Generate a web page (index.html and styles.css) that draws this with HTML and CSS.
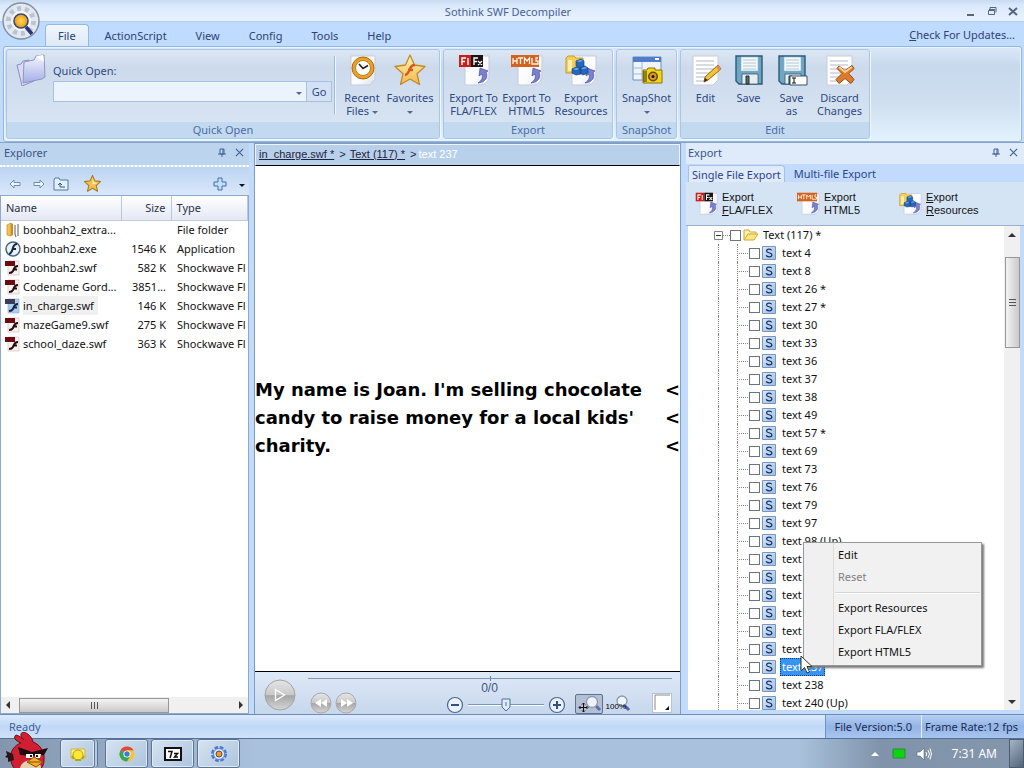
FILE: index.html
```html
<!DOCTYPE html>
<html lang="en">
<head>
<meta charset="utf-8">
<title>Sothink SWF Decompiler</title>
<link rel="stylesheet" href="styles.css">
</head>
<body>
<svg class="defs" aria-hidden="true">
  <defs>
    <linearGradient id="g-paper" x1="0" y1="0" x2="1" y2="1"><stop offset="0" stop-color="#fff"/><stop offset=".6" stop-color="#fbfbfe"/><stop offset="1" stop-color="#d9dff0"/></linearGradient>
    <linearGradient id="g-star" x1="0" y1="0" x2="0" y2="1"><stop offset="0" stop-color="#fff3b8"/><stop offset="1" stop-color="#f2b84a"/></linearGradient>
    <linearGradient id="g-folder" x1="0" y1="0" x2="0" y2="1"><stop offset="0" stop-color="#f7f6ff"/><stop offset="1" stop-color="#a3aee6"/></linearGradient>
    <radialGradient id="g-orb"><stop offset="0" stop-color="#ffd75a"/><stop offset="1" stop-color="#e89a10"/></radialGradient>
    <linearGradient id="g-ball" x1="0" y1="0" x2="0" y2="1"><stop offset="0" stop-color="#e6e6e6"/><stop offset=".5" stop-color="#c8c8c8"/><stop offset=".52" stop-color="#a6a6a6"/><stop offset="1" stop-color="#d6d6d6"/></linearGradient>
    <linearGradient id="g-s" x1="0" y1="0" x2="1" y2="1"><stop offset="0" stop-color="#dceafa"/><stop offset="1" stop-color="#9dbbe0"/></linearGradient>
  </defs>
  <symbol id="i-page" viewBox="0 0 32 32"><path d="M7 2h24v23l-6 6H7z" fill="url(#g-paper)" stroke="#c3cbdc"/><path d="M31 25h-6v6z" fill="#fff" stroke="#b9c2d4" stroke-width=".6"/></symbol>
  <symbol id="i-turn" viewBox="0 0 32 32"><path d="M20 29c8-1 10-6 8-11l2-1-8-3-1 8 3-2c1 4 0 6-4 9z" fill="#7a80cc" stroke="#4a4fa4" stroke-width=".7"/></symbol>
  <symbol id="i-flafx" viewBox="0 0 32 32"><use href="#i-page"/><use href="#i-turn"/><path d="M1 1h12v12H1z" fill="#c8201c"/><path d="M13 1h12v12H13z" fill="#1d1114"/><path d="M4 11V4h4M4 7.500h3M10 4v7M16 11V4h4M16 7.500h3M20 7l4 4M24 7l-4 4" fill="none" stroke="#fff" stroke-width="1.400"/></symbol>
  <symbol id="i-html5" viewBox="0 0 32 32"><use href="#i-page"/><use href="#i-turn"/><path d="M0 1h28v12H0z" fill="#d3611f"/><path d="M2 4v6M6 4v6M2 7h4M7 4h5M9.500 4v6M13.500 10V4l2.500 3 2.500-3v6M21 4v6h3M27 4h-2v3h2v3h-3" fill="none" stroke="#fff3df" stroke-width="1.300"/></symbol>
  <symbol id="i-res" viewBox="0 0 32 32"><use href="#i-page"/><use href="#i-turn"/><path d="M1 4l2-2h6l2 2h7v15H1z" fill="#f3cf58" stroke="#c89b28"/><path d="M3 6h4v11H3z" fill="#fff0ad"/><path d="M11 7l5-2 3 2v6l-5 1-3-2zM7 15l4-2 5 2v5l-5 1-4-2zM15 14l5-2 3 2v5l-5 2-3-2z" fill="#2467bf" stroke="#124488" stroke-width=".7"/><path d="M12 7l4-1 2 1-4 1zM8 15l4-1 2 1-3 1zM16 14l4-1 2 1-4 1z" fill="#7db3f0"/></symbol>
  <symbol id="i-clock" viewBox="0 0 32 32"><path d="M5 2h24v23l-5 6H5z" fill="url(#g-paper)" stroke="#c3cbdc"/><circle cx="17" cy="14" r="11" fill="#e9a227" stroke="#a86c12"/><circle cx="17" cy="14" r="7.500" fill="#fff" stroke="#b9801c"/><path d="M13 10l4 4.500 5-3" fill="none" stroke="#222" stroke-width="1.600"/></symbol>
  <symbol id="i-star" viewBox="0 0 32 32"><path d="M16 1l4.500 10L31 12.500l-8 7.300 2.500 10.700L16 25l-9.500 5.500L9 19.800 1 12.500 11.500 11z" fill="url(#g-star)" stroke="#c48b25" stroke-width="1.300" stroke-linejoin="round"/><path d="M21 11c-4 0-5 3-6 6-1 2-2 4-4 4M14 16h5" fill="none" stroke="#dc571c" stroke-width="2.400"/></symbol>
  <symbol id="i-gold" viewBox="0 0 32 32"><path d="M16 1l4.500 10L31 12.500l-8 7.300 2.500 10.700L16 25l-9.500 5.500L9 19.800 1 12.500 11.500 11z" fill="#f5bf4c" stroke="#a8772a" stroke-width="2" stroke-linejoin="round"/><path d="M16 6l3 8 7 1-10 3z" fill="#fff1b5"/></symbol>
  <symbol id="i-snap" viewBox="0 0 32 32"><path d="M2 3h28v23H2z" fill="#eef5ff" stroke="#6d8fca"/><path d="M2 3h28v5H2z" fill="#4f7dcc"/><path d="M24 5h4" stroke="#fff" stroke-width="2"/><path d="M11 8v18M2 14h9M2 20h9" stroke="#9db8e2"/><path d="M12 16h4l1-2h7v2h7v13H12z" fill="#f3d31c" stroke="#8c7506"/><circle cx="22" cy="22.500" r="5" fill="#6b4f10"/><circle cx="22" cy="22.500" r="3.400" fill="#d39a28"/><circle cx="22" cy="22.500" r="1.500" fill="#241603"/><path d="M13 17v11M15 17v11" stroke="#383005"/></symbol>
  <symbol id="i-sheet" viewBox="0 0 32 32"><path d="M3 2h25v24l-5 5H3z" fill="#fdfdfd" stroke="#c9cdd6"/><path d="M6 7h18M6 11h18M6 15h18M6 19h14M6 23h12M6 27h10" stroke="#b4b9c4"/></symbol>
  <symbol id="i-edit" viewBox="0 0 32 32"><use href="#i-sheet"/><path d="M28 11l3 4-13 11-4 2 1-5z" fill="#f5c433" stroke="#8d6418"/><path d="M28 11l3 4-2 2-3-4z" fill="#df8a5c"/><path d="M14 28l1-4 3 2z" fill="#4b2a12"/></symbol>
  <symbol id="i-save" viewBox="0 0 32 32"><path d="M3 2h26v28H6l-3-3z" fill="#6fa6c4" stroke="#2c5a78" stroke-width="1.400"/><path d="M8 3h17v14H8z" fill="#f4f9fc" stroke="#8fb3c7" stroke-width=".6"/><path d="M10 6h13M10 9h13M10 12h13M10 15h13" stroke="#b3c6d2"/><path d="M9 20h16v10H9z" fill="#e8edf0" stroke="#355b70" stroke-width=".8"/><path d="M13 22h3v8h-3z" fill="#5d6870" stroke="#233"/></symbol>
  <symbol id="i-saveas" viewBox="0 0 32 32"><use href="#i-save"/><path d="M14 22h17v9H14z" fill="#fff" stroke="#356"/><path d="M16 24h4M16 29h4M18 24v5" stroke="#111"/></symbol>
  <symbol id="i-discard" viewBox="0 0 32 32"><use href="#i-sheet"/><path d="M15 12l6 4.500 7-5 2 3-5 5 5 6-3 4-6-5-6 5-3-4 6-6-5-5z" fill="#dd7b2c" stroke="#98471a"/><path d="M15 13l6 5 7-5" fill="none" stroke="#ffd08c" stroke-width="2"/></symbol>
  <symbol id="i-folders" viewBox="0 0 32 32"><path d="M2 11l4-1 2-3 6-1 5 21-12 5z" fill="#d9daf6" stroke="#8a8fbf"/><path d="M9 8l10-2 2-4 8-1 1 22-3 2L8 29z" fill="url(#g-folder)" stroke="#8f94c2"/><path d="M21 2l7-1 1 7" fill="#fff"/></symbol>
  <symbol id="i-swf" viewBox="0 0 16 16"><path d="M3 1h11v14H3z" fill="#f7f2f2" stroke="#cfc4c4" stroke-width=".7"/><path d="M0 1h10v5H0z" fill="#6c0a10"/><path d="M13 6c-4 0-4 3-5 5-1 2-2 2-4 2M8 9.500h4" fill="none" stroke="#27080b" stroke-width="2"/></symbol>
  <symbol id="i-swfsel" viewBox="0 0 16 16"><path d="M3 1h11v14H3z" fill="#a9cdec" stroke="#8fb2d2" stroke-width=".7"/><path d="M0 1h10v5H0z" fill="#3b3d58"/><path d="M13 6c-4 0-4 3-5 5-1 2-2 2-4 2M8 9.500h4" fill="none" stroke="#1a2340" stroke-width="2"/></symbol>
  <symbol id="i-exe" viewBox="0 0 16 16"><circle cx="8" cy="8" r="7" fill="#eaf1f6" stroke="#47657c" stroke-width="1.500"/><path d="M12 3C8 3 8 7 7 10c-1 2-2 3-3 3M7 8h4" fill="none" stroke="#142b40" stroke-width="2"/></symbol>
  <symbol id="i-zip" viewBox="0 0 16 16"><path d="M2 3l4-2v13l-4-1z" fill="#f3c351" stroke="#b98a26" stroke-width=".7"/><path d="M6 1l2 1v11l-2 1z" fill="#c98d25"/><path d="M10 3v9l1 3M13 2v12" fill="none" stroke="#73777e" stroke-width="1.200"/></symbol>
  <symbol id="i-text" viewBox="0 0 14 14"><path d="M.5.5h13v13H.5z" fill="url(#g-s)" stroke="#7596c2"/><path d="M9.700 4.400C9 2.600 4.600 2.600 4.600 4.900c0 2.400 5.300 1.300 5.300 4 0 2.500-5 2.500-5.700.4" fill="none" stroke="#14305f" stroke-width="1.200"/></symbol>
  <symbol id="i-open" viewBox="0 0 16 14"><path d="M1 12V2h5l1 2h6v2" fill="#fff3b0" stroke="#cfa735"/><path d="M1 12l4-6h10l-4 6z" fill="#ffe784" stroke="#cfa735"/></symbol>
  <symbol id="i-back" viewBox="0 0 12 10"><path d="M1 5l4-4v2.500h6v3H5V9z" fill="#eef5fd" stroke="#6c8cb8"/></symbol>
  <symbol id="i-fwd" viewBox="0 0 12 10"><path d="M11 5L7 1v2.500H1v3h6V9z" fill="#eef5fd" stroke="#6c8cb8"/></symbol>
  <symbol id="i-up" viewBox="0 0 16 14"><path d="M1 13V3l1-2h4l1 2h8v10z" fill="#e5f0fc" stroke="#4f78ad"/><path d="M12 10H7V6M5 8l2-2 2 2" fill="none" stroke="#2a568f"/></symbol>
  <symbol id="i-plus" viewBox="0 0 14 14"><path d="M5 1h4v4h4v4H9v4H5V9H1V5h4z" fill="#c3defb" stroke="#3e70a8"/></symbol>
  <symbol id="i-pin" viewBox="0 0 8 10"><path d="M2 1h4v5H2zM5 1v5M0 6h8M4 6v3" fill="none" stroke="#446394"/></symbol>
  <symbol id="i-x" viewBox="0 0 10 10"><path d="M1 1l8 8M9 1L1 9" stroke="#446394" stroke-width="1.300"/></symbol>
</svg>

<div class="app">
  <header class="top">
    <div class="titlebar">
      <h1 class="title">Sothink SWF Decompiler</h1>
      <div class="winbtns">
        <button type="button" aria-label="Minimize"><svg width="10" height="12"><path d="M1 10h7" stroke="#55657f" stroke-width="2"/></svg></button>
        <button type="button" aria-label="Restore"><svg width="10" height="12"><path d="M1.500 5.500h6v4h-6zM2 4.500h6M9 7.500v-5H3v2" fill="none" stroke="#55657f"/></svg></button>
        <button type="button" aria-label="Close"><svg width="10" height="12"><path d="M1 3l8 7M9 3l-8 7" stroke="#55657f" stroke-width="2"/></svg></button>
      </div>
    </div>
    <nav class="menubar">
      <button type="button" class="tab active">File</button>
      <button type="button" class="tab">ActionScript</button>
      <button type="button" class="tab">View</button>
      <button type="button" class="tab">Config</button>
      <button type="button" class="tab">Tools</button>
      <button type="button" class="tab">Help</button>
      <a class="updates" href="#updates"><u>C</u>heck For Updates...</a>
    </nav>
    <button type="button" class="orb" aria-label="Application menu">
      <svg viewBox="0 0 38 38" width="38" height="38"><circle cx="19" cy="19" r="18" fill="#e3e9ef" stroke="#8292a8" stroke-width="1.500"/><circle cx="19" cy="19" r="12.500" fill="none" stroke="#b9c5d2" stroke-width="5" stroke-dasharray="4 3.800"/><circle cx="19" cy="19" r="10" fill="#f4f7fa"/><circle cx="19" cy="19" r="7" fill="url(#g-orb)" stroke="#3d4676" stroke-width="1.600"/><path d="M24 25l6 7" stroke="#28347e" stroke-width="3.500"/></svg>
    </button>
  </header>

  <section class="ribbon">
    <div class="group quick">
      <div class="group-body">
        <svg class="folders" width="32" height="32"><use href="#i-folders"/></svg>
        <form class="quickform">
          <label for="quick">Quick Open:</label>
          <div class="combo"><input id="quick" type="text"><button type="button" class="drop" aria-label="Show list"><i class="caret"></i></button><button type="button" class="go">Go</button></div>
        </form>
        <span class="sep"></span>
        <button type="button" class="tool"><svg><use href="#i-clock"/></svg><span>Recent<br>Files <i class="caret"></i></span></button>
        <button type="button" class="tool"><svg><use href="#i-star"/></svg><span>Favorites<br><i class="caret"></i></span></button>
      </div>
      <div class="group-label">Quick Open</div>
    </div>
    <div class="group">
      <div class="group-body">
        <button type="button" class="tool"><svg><use href="#i-flafx"/></svg><span>Export To<br>FLA/FLEX</span></button>
        <button type="button" class="tool"><svg><use href="#i-html5"/></svg><span>Export To<br>HTML5</span></button>
        <button type="button" class="tool wide"><svg><use href="#i-res"/></svg><span>Export<br>Resources</span></button>
      </div>
      <div class="group-label">Export</div>
    </div>
    <div class="group">
      <div class="group-body">
        <button type="button" class="tool"><svg><use href="#i-snap"/></svg><span>SnapShot<br><i class="caret"></i></span></button>
      </div>
      <div class="group-label">SnapShot</div>
    </div>
    <div class="group">
      <div class="group-body">
        <button type="button" class="tool slim"><svg><use href="#i-edit"/></svg><span>Edit</span></button>
        <button type="button" class="tool slim"><svg><use href="#i-save"/></svg><span>Save</span></button>
        <button type="button" class="tool slim"><svg><use href="#i-saveas"/></svg><span>Save<br>as</span></button>
        <button type="button" class="tool"><svg><use href="#i-discard"/></svg><span>Discard<br>Changes</span></button>
      </div>
      <div class="group-label">Edit</div>
    </div>
  </section>

  <main class="work">
    <section class="explorer">
      <div class="panel-head"><h2>Explorer</h2><button type="button" aria-label="Pin"><svg width="8" height="10"><use href="#i-pin"/></svg></button><button type="button" aria-label="Close"><svg width="9" height="9"><use href="#i-x"/></svg></button></div>
      <div class="nav-tools">
        <button type="button" aria-label="Back"><svg width="12" height="10"><use href="#i-back"/></svg></button>
        <button type="button" aria-label="Forward"><svg width="12" height="10"><use href="#i-fwd"/></svg></button>
        <button type="button" aria-label="Up one level"><svg width="16" height="14"><use href="#i-up"/></svg></button>
        <button type="button" class="fav" aria-label="Favorites"><svg width="17" height="17"><use href="#i-gold"/></svg></button>
        <button type="button" class="add" aria-label="Add"><svg width="14" height="14"><use href="#i-plus"/></svg></button>
        <button type="button" aria-label="More"><i class="caret dark"></i></button>
      </div>
      <div class="files">
        <table>
          <colgroup><col class="c-name"><col class="c-size"><col class="c-type"></colgroup>
          <thead><tr><th>Name</th><th class="num">Size</th><th>Type</th></tr></thead>
          <tbody>
            <tr><td><div class="file"><svg><use href="#i-zip"/></svg><span>boohbah2_extra...</span></div></td><td class="num"></td><td>File folder</td></tr>
            <tr><td><div class="file"><svg><use href="#i-exe"/></svg><span>boohbah2.exe</span></div></td><td class="num">1546 K</td><td>Application</td></tr>
            <tr><td><div class="file"><svg><use href="#i-swf"/></svg><span>boohbah2.swf</span></div></td><td class="num">582 K</td><td>Shockwave Fl</td></tr>
            <tr><td><div class="file"><svg><use href="#i-swf"/></svg><span>Codename Gord...</span></div></td><td class="num">3851...</td><td>Shockwave Fl</td></tr>
            <tr><td><div class="file picked"><svg><use href="#i-swfsel"/></svg><span>in_charge.swf</span></div></td><td class="num">146 K</td><td>Shockwave Fl</td></tr>
            <tr><td><div class="file"><svg><use href="#i-swf"/></svg><span>mazeGame9.swf</span></div></td><td class="num">275 K</td><td>Shockwave Fl</td></tr>
            <tr><td><div class="file"><svg><use href="#i-swf"/></svg><span>school_daze.swf</span></div></td><td class="num">363 K</td><td>Shockwave Fl</td></tr>
          </tbody>
        </table>
      </div>
      <div class="hscroll"><i class="arr left"></i><div class="lane"><div class="thumb"><i></i><i></i><i></i></div></div><i class="arr right"></i></div>
    </section>

    <section class="viewer">
      <nav class="crumbs"><a href="#swf">in_charge.swf *</a><span>&gt;</span><a href="#text">Text (117) *</a><span>&gt;</span><b>text 237</b></nav>
      <div class="stage">
        <p><span>My name is Joan. I'm selling chocolate</span><span>&lt;</span></p>
        <p><span>candy to raise money for a local kids'</span><span>&lt;</span></p>
        <p><span>charity.</span><span>&lt;</span></p>
      </div>
      <div class="player">
        <button type="button" class="play" aria-label="Play"><svg width="32" height="32"><circle cx="16" cy="16" r="15" fill="url(#g-ball)" stroke="#a3a3a3"/><path d="M11.500 10.500l9 5.500-9 5.500z" fill="none" stroke="#fff" stroke-width="1.300"/></svg></button>
        <div class="transport">
          <input class="seek" type="range" aria-label="Position">
          <div class="controls">
            <div class="skip">
              <button type="button" aria-label="Previous"><svg width="22" height="22"><circle cx="11" cy="11" r="10" fill="url(#g-ball)" stroke="#aaa"/><path d="M11 7v8l-6-4zM17 7v8l-6-4z" fill="#fff"/></svg></button>
              <button type="button" aria-label="Next"><svg width="22" height="22"><circle cx="11" cy="11" r="10" fill="url(#g-ball)" stroke="#aaa"/><path d="M6 7v8l6-4zM12 7v8l6-4z" fill="#fff"/></svg></button>
            </div>
            <div class="zoomer">
              <output>0/0</output>
              <div class="zoomrow">
                <button type="button" aria-label="Zoom out"><svg width="18" height="18"><circle cx="9" cy="9" r="7.500" fill="#e9f2fc" stroke="#4a6791" stroke-width="1.200"/><path d="M5 9h8" stroke="#33517c" stroke-width="2"/></svg></button>
                <input class="zoom" type="range" aria-label="Zoom">
                <button type="button" aria-label="Zoom in"><svg width="18" height="18"><circle cx="9" cy="9" r="7.500" fill="#e9f2fc" stroke="#4a6791" stroke-width="1.200"/><path d="M5 9h8M9 5v8" stroke="#33517c" stroke-width="2"/></svg></button>
              </div>
            </div>
            <div class="views">
              <button type="button" class="fit" aria-label="Fit view"><svg width="26" height="18"><path d="M20 11l4 4" stroke="#5c6fa8" stroke-width="3"/><circle cx="16" cy="7" r="5.500" fill="#eef3fa" stroke="#8b98ad" stroke-width="1.300"/><path d="M3 12.500h8M7.500 8v9M4.500 11L3 12.500 4.500 14M10.500 11l1.500 1.500-1.500 1.500M6 9.500L7.500 8 9 9.500M6 15.500L7.500 17 9 15.500" fill="none" stroke="#111"/></svg></button>
              <button type="button" class="full"><span>100%</span><svg width="16" height="18"><path d="M9 10l5 5" stroke="#4c62b4" stroke-width="3"/><circle cx="7" cy="6" r="5" fill="#eef6fd" stroke="#8b98ad" stroke-width="1.300"/></svg></button>
            </div>
            <button type="button" class="swatch" aria-label="Background colour"><svg width="18" height="18"><path d="M2 16V1h15" fill="none" stroke="#888"/><path d="M16 12v4h-4z" fill="#111"/></svg></button>
          </div>
        </div>
      </div>
    </section>

    <section class="export">
      <div class="panel-head light"><h2>Export</h2><button type="button" aria-label="Pin"><svg width="8" height="10"><use href="#i-pin"/></svg></button><button type="button" aria-label="Close"><svg width="9" height="9"><use href="#i-x"/></svg></button></div>
      <div class="subtabs"><button type="button" class="on">Single File Export</button><button type="button">Multi-file Export</button></div>
      <div class="exp-tools">
        <button type="button"><svg><use href="#i-flafx"/></svg><span>Export<br><u>F</u>LA/FLEX</span></button>
        <button type="button"><svg><use href="#i-html5"/></svg><span>Export<br>HTML5</span></button>
        <button type="button"><svg><use href="#i-res"/></svg><span><u>E</u>xport<br><u>R</u>esources</span></button>
      </div>
      <div class="treebox">
        <ul class="tree">
          <li class="root"><svg class="minus" width="9" height="9"><path d="M.5.5h8v8h-8z" fill="#fff" stroke="#848484"/><path d="M2 4.500h5" stroke="#333"/></svg><i class="stub"></i><input type="checkbox" id="n0"><svg class="fold" width="16" height="14"><use href="#i-open"/></svg><label for="n0">Text (117) *</label></li>
          <li><i class="rail"></i><i class="branch"></i><input type="checkbox" id="n1"><svg><use href="#i-text"/></svg><label for="n1">text 4</label></li>
          <li><i class="rail"></i><i class="branch"></i><input type="checkbox" id="n2"><svg><use href="#i-text"/></svg><label for="n2">text 8</label></li>
          <li><i class="rail"></i><i class="branch"></i><input type="checkbox" id="n3"><svg><use href="#i-text"/></svg><label for="n3">text 26 *</label></li>
          <li><i class="rail"></i><i class="branch"></i><input type="checkbox" id="n4"><svg><use href="#i-text"/></svg><label for="n4">text 27 *</label></li>
          <li><i class="rail"></i><i class="branch"></i><input type="checkbox" id="n5"><svg><use href="#i-text"/></svg><label for="n5">text 30</label></li>
          <li><i class="rail"></i><i class="branch"></i><input type="checkbox" id="n6"><svg><use href="#i-text"/></svg><label for="n6">text 33</label></li>
          <li><i class="rail"></i><i class="branch"></i><input type="checkbox" id="n7"><svg><use href="#i-text"/></svg><label for="n7">text 36</label></li>
          <li><i class="rail"></i><i class="branch"></i><input type="checkbox" id="n8"><svg><use href="#i-text"/></svg><label for="n8">text 37</label></li>
          <li><i class="rail"></i><i class="branch"></i><input type="checkbox" id="n9"><svg><use href="#i-text"/></svg><label for="n9">text 38</label></li>
          <li><i class="rail"></i><i class="branch"></i><input type="checkbox" id="n10"><svg><use href="#i-text"/></svg><label for="n10">text 49</label></li>
          <li><i class="rail"></i><i class="branch"></i><input type="checkbox" id="n11"><svg><use href="#i-text"/></svg><label for="n11">text 57 *</label></li>
          <li><i class="rail"></i><i class="branch"></i><input type="checkbox" id="n12"><svg><use href="#i-text"/></svg><label for="n12">text 69</label></li>
          <li><i class="rail"></i><i class="branch"></i><input type="checkbox" id="n13"><svg><use href="#i-text"/></svg><label for="n13">text 73</label></li>
          <li><i class="rail"></i><i class="branch"></i><input type="checkbox" id="n14"><svg><use href="#i-text"/></svg><label for="n14">text 76</label></li>
          <li><i class="rail"></i><i class="branch"></i><input type="checkbox" id="n15"><svg><use href="#i-text"/></svg><label for="n15">text 79</label></li>
          <li><i class="rail"></i><i class="branch"></i><input type="checkbox" id="n16"><svg><use href="#i-text"/></svg><label for="n16">text 97</label></li>
          <li><i class="rail"></i><i class="branch"></i><input type="checkbox" id="n17"><svg><use href="#i-text"/></svg><label for="n17">text 98 (Up)</label></li>
          <li><i class="rail"></i><i class="branch"></i><input type="checkbox" id="n18"><svg><use href="#i-text"/></svg><label for="n18">text</label></li>
          <li><i class="rail"></i><i class="branch"></i><input type="checkbox" id="n19"><svg><use href="#i-text"/></svg><label for="n19">text</label></li>
          <li><i class="rail"></i><i class="branch"></i><input type="checkbox" id="n20"><svg><use href="#i-text"/></svg><label for="n20">text</label></li>
          <li><i class="rail"></i><i class="branch"></i><input type="checkbox" id="n21"><svg><use href="#i-text"/></svg><label for="n21">text</label></li>
          <li><i class="rail"></i><i class="branch"></i><input type="checkbox" id="n22"><svg><use href="#i-text"/></svg><label for="n22">text</label></li>
          <li><i class="rail"></i><i class="branch"></i><input type="checkbox" id="n23"><svg><use href="#i-text"/></svg><label for="n23">text</label></li>
          <li class="selected"><i class="rail"></i><i class="branch"></i><input type="checkbox" id="n24"><svg><use href="#i-text"/></svg><label for="n24">text 237</label>
            <div class="context" role="menu">
              <button type="button" role="menuitem">Edit</button>
              <button type="button" role="menuitem" disabled>Reset</button>
              <hr>
              <button type="button" role="menuitem">Export Resources</button>
              <button type="button" role="menuitem">Export FLA/FLEX</button>
              <button type="button" role="menuitem">Export HTML5</button>
            </div>
            <svg class="cursor" viewBox="0 0 13 19"><path d="M1 1v15l3.500-3.500L7 18l2.500-1-2.500-5.500h5z" fill="#fff" stroke="#333"/></svg>
          </li>
          <li><i class="rail"></i><i class="branch"></i><input type="checkbox" id="n25"><svg><use href="#i-text"/></svg><label for="n25">text 238</label></li>
          <li><i class="rail"></i><i class="branch"></i><input type="checkbox" id="n26"><svg><use href="#i-text"/></svg><label for="n26">text 240 (Up)</label></li>
        </ul>
        <div class="vscroll"><i class="arr up"></i><div class="lane"><div class="thumb"><i></i><i></i><i></i></div></div><i class="arr down"></i></div>
      </div>
    </section>
  </main>

  <footer class="status"><span class="ready">Ready</span><span class="cell">File Version:5.0</span><span class="cell">Frame Rate:12 fps</span></footer>

  <div class="taskbar">
    <button type="button" class="start" aria-label="Start"><svg viewBox="0 0 44 36" width="44" height="36"><path d="M16 11C10 9 8 5 11 3c4 1 6 3 8 5-4-3-4-7-1-8 5 1 9 5 10 10 8 3 12 11 11 18 0 5-2 8-4 9H10c-5-5-6-14-2-20 2-3 5-5 8-6z" fill="#d01f33" stroke="#6f0c19"/><path d="M8 22l-7-3 1 4-2 2 3 1 0 4 6-2z" fill="#2a1618"/><path d="M15 36c1-5 6-8 12-8s9 4 9 8z" fill="#e5cfae"/><path d="M13 15l14 5 16-4-4 7-12 1-12-1z" fill="#1f0a0d"/><path d="M21 22h7v4h-7zM30 22h6l-1 4h-5z" fill="#fff"/><path d="M25 23h2v2h-2zM31 23h2v2h-2z" fill="#111"/><path d="M22 30l7-5 9 5-7 5z" fill="#f4ab25" stroke="#85520c"/><path d="M23 30l14 0" stroke="#85520c"/></svg></button>
    <button type="button" class="task first" aria-label="Pictures"><svg width="20" height="20"><path d="M3 5h14v9H3z" fill="#f7eb8e" stroke="#d0b73d"/><circle cx="10" cy="11" r="5" fill="#ffe734" stroke="#b8a313"/><path d="M4 12l2 3M16 12l-2 3M7 16h6" stroke="#b8a313" stroke-width="2"/></svg></button>
    <button type="button" class="task" aria-label="Chrome"><svg width="18" height="18"><circle cx="9" cy="9" r="7.500" fill="#f6c530"/><path d="M9 9L2.500 5.250A7.500 7.500 0 0 1 15.500 5.250H9z" fill="#dd4a3b"/><path d="M9 9L2.500 5.250A7.500 7.500 0 0 0 9 16.500l3.500-6z" fill="#37a559"/><circle cx="9" cy="9" r="3.600" fill="#fff"/><circle cx="9" cy="9" r="2.700" fill="#3f79dd"/></svg></button>
    <button type="button" class="task" aria-label="7-Zip"><svg width="18" height="14"><path d="M1 1h16v12H1z" fill="#fff" stroke="#111" stroke-width="2"/><path d="M4 4.500h4L6 11M10 6.500h3.500l-3 3.500H14" fill="none" stroke="#111" stroke-width="1.500"/></svg></button>
    <button type="button" class="task" aria-label="SWF Decompiler"><svg width="20" height="20"><circle cx="10" cy="10" r="6.500" fill="none" stroke="#4b78d0" stroke-width="3" stroke-dasharray="3.500 1.600"/><circle cx="10" cy="10" r="5.500" fill="#e2ecfa" stroke="#5c83cf"/><circle cx="10" cy="10" r="3" fill="#f29a1c" stroke="#444b78"/></svg></button>
    <div class="tray">
      <svg width="10" height="6"><path d="M1 5l4-4 4 4z" fill="#fff"/></svg>
      <svg width="14" height="12"><path d="M1 1h12v9H1z" fill="#0bd50b" stroke="#2c8a3c"/></svg>
      <svg width="16" height="14"><path d="M1 5h3l4-4v12L4 9H1z" fill="#fff" stroke="#56677c" stroke-width=".6"/><path d="M10 5q1.500 2 0 4M12 3q3 4 0 8M14 1.500q3 5.500 0 11" fill="none" stroke="#fff"/></svg>
      <time>7:31 AM</time>
      <button type="button" class="peek" aria-label="Show desktop"></button>
    </div>
  </div>
</div>
</body>
</html>
```
FILE: styles.css
```css
* { box-sizing: border-box; }
body { margin: 0; font-family: "Noto Sans", "Open Sans", sans-serif; font-size: 11px; line-height: 13px; color: #111; }
button, input { font: inherit; color: inherit; margin: 0; padding: 0; }
button { border: 0; background: none; }
h1, h2 { margin: 0; font-weight: 400; font-size: inherit; }
p, ul { margin: 0; padding: 0; }
svg { display: block; flex: none; }
a { color: inherit; }
.defs { position: absolute; width: 0; height: 0; }
.app { height: 100vh; display: flex; flex-direction: column; background: #c3dbfb; overflow: hidden; }
.caret { display: inline-block; border: 3px solid transparent; border-top-color: #57698c; border-bottom: 0; vertical-align: middle; }
.caret.dark { border-top-color: #111; }

/* title and menu */
.top { position: relative; color: #2f4275; }
.titlebar { height: 22px; display: flex; align-items: center; background: linear-gradient(#c6daf2, #dbe9fb 25%, #e8f2fe); border-bottom: 1px solid #b4d0f0; color: #4a6296; }
.title { flex: 1; text-align: center; padding: 2px 0 0 50px; }
.winbtns { display: flex; gap: 11px; padding-right: 6px; }
.menubar { height: 24px; display: flex; align-items: stretch; padding: 2px 9px 0 45px; background: #bfdbff; }
.tab { padding: 0 12px; margin-right: 3px; border: 1px solid transparent; border-bottom: 0; }
.tab.active { background: linear-gradient(#f0f8fe, #dde9f5); border-color: #95b8e2; border-radius: 4px 4px 0 0; }
.updates { margin-left: auto; padding-top: 4px; text-decoration: none; }
.orb { position: absolute; left: 2px; top: 2px; }

/* ribbon */
.ribbon { display: flex; gap: 3px; margin: 0 2px 0 3px; padding: 2px; border: 1px solid #91b6e4; border-radius: 3px; background: linear-gradient(#dbe8f7, #c8d9ed 20%, #cfdff0 60%, #e2f2fd); box-shadow: inset 0 0 0 1px #e7f3ff; color: #2f4a82; }
.group { display: flex; flex-direction: column; border: 1px solid #a9c6e5; border-radius: 3px; box-shadow: 1px 1px 0 #eef7ff; background: linear-gradient(#dce7f4, #ccdaec 20%, #dae6f4); overflow: hidden; }
.quick { width: 434px; }
.group-body { display: flex; padding: 4px 3px 0; height: 72px; }
.quick .group-body { padding-right: 5px; }
.group-label { height: 16px; line-height: 16px; text-align: center; background: #c2d9f0; color: #4c6ca4; }
.folders { margin: 0 6px 0 5px; }
.quickform { flex: 1; padding-top: 10px; display: flex; flex-direction: column; gap: 4px; }
.combo { display: flex; height: 21px; border: 1px solid #a8c1e2; background: #eaf3fe; }
.combo input { flex: 1; min-width: 0; border: 0; background: transparent; }
.drop { width: 14px; }
.go { width: 25px; background: #d3e1f4; border-left: 1px solid #a8c1e2; }
.sep { width: 2px; height: 58px; margin: 2px 2px; border-left: 1px solid #9db9da; background: #eef6ff; }
.tool { width: 53px; display: flex; flex-direction: column; align-items: center; gap: 5px; white-space: nowrap; }
.quick .tool { width: 48px; }
.tool.wide { width: 56px; }
.tool.slim { width: 43px; }
.tool svg { width: 32px; height: 32px; }

/* columns */
.work { flex: 1; min-height: 0; display: grid; grid-template-columns: 249px minmax(0, 1fr) 338px; gap: 5px; border-top: 1px solid #86a3c6; }
.work > section { min-width: 0; min-height: 0; display: flex; flex-direction: column; }
.panel-head { height: 22px; display: flex; align-items: center; gap: 9px; padding: 0 5px 3px 4px; background: #bdd4ee; color: #3a5488; }
.panel-head.light { height: 21px; background: #dfeafb; padding: 0 6px 2px 2px; }
.panel-head h2 { flex: 1; }
.nav-tools { height: 30px; display: flex; align-items: center; gap: 12px; padding: 5px 4px 0 9px; border-top: 2px dotted #fff; background: linear-gradient(#bcd4f0, #d9e7fb); }
.nav-tools button:nth-child(3) { margin-left: -4px; }
.fav { margin-left: 3px; }
.add { margin-left: auto; }
.files { flex: 1; min-height: 0; overflow: hidden; background: #fff; border: 1px solid #8fa9cb; border-bottom: 0; font-size: 11px; }
table { width: 100%; table-layout: fixed; border-collapse: collapse; }
.c-name { width: 120px; }
.c-size { width: 50px; }
th { height: 24px; padding: 0 5px; text-align: left; font-weight: 400; background: linear-gradient(#fff, #e4e8f4); border-right: 1px solid #bcc6da; border-bottom: 1px solid #c3cbdc; color: #2b3346; }
td { height: 19px; padding: 0 0 0 6px; white-space: nowrap; overflow: hidden; }
.num { text-align: right; padding: 0 5px 0 0; }
td:first-child { padding-left: 4px; }
.file { display: flex; align-items: center; gap: 2px; }
.file svg { width: 16px; height: 16px; }
.file.picked span { background: #f0f0f0; padding: 3px 4px 3px 0; }
.hscroll { height: 17px; display: flex; align-items: center; background: #f0f0f0; border: 1px solid #8fa9cb; border-top: 0; padding: 0 5px; gap: 9px; }
.lane { flex: 1; }
.hscroll .thumb { width: 150px; height: 15px; border: 1px solid #979797; background: linear-gradient(#f4f4f4, #c9c9c9); display: flex; justify-content: center; align-items: center; gap: 2px; }
.hscroll .thumb i { width: 1px; height: 7px; background: #555; }
.arr { border: 4px solid transparent; }
.arr.left { border-right-color: #333; border-left: 0; }
.arr.right { border-left-color: #333; border-right: 0; }
.arr.up { border-bottom-color: #333; border-top: 0; }
.arr.down { border-top-color: #333; border-bottom: 0; }

/* viewer */
.viewer { border: 1px solid #7f9cc4; border-bottom: 0; font-family: "Liberation Sans", Arial, sans-serif; }
.crumbs { height: 22px; display: flex; align-items: center; gap: 5px; padding: 0 3px 1px; border: 1px solid #eaf3ff; border-bottom: 1px solid #000; background: #b9d0ea; color: #1d2440; font-size: 11px; }
.crumbs a + span { margin-right: -1px; }
.crumbs b { color: #fff; font-weight: 400; margin-left: -2px; }
.stage { flex: 1; min-height: 0; background: #fff; overflow: hidden; display: flex; flex-direction: column; justify-content: center; padding-bottom: 2px; font: 700 18px/28px "DejaVu Sans", sans-serif; color: #000; }
.stage p { display: flex; justify-content: space-between; white-space: nowrap; }
.player { height: 43px; display: flex; gap: 12px; padding: 4px 8px 0 9px; border-top: 1px solid #000; background: linear-gradient(#dfe9f7, #c6d7ec); }
.transport { flex: 1; display: flex; flex-direction: column; }
input[type="range"] { appearance: none; background: transparent; }
.seek { width: 100%; height: 5px; }
.seek::-webkit-slider-runnable-track { height: 5px; background: linear-gradient(transparent 2px, #8098bb 2px, #8098bb 3px, transparent 3px); }
.seek::-webkit-slider-thumb { appearance: none; width: 1px; height: 5px; background: #6d86ab; }
.controls { flex: 1; display: flex; align-items: flex-end; }
.skip { display: flex; gap: 3px; margin-left: 2px; }
.zoomer { margin-left: auto; margin-right: 9px; text-align: center; color: #3c5688; }
.zoomer output { display: block; height: 13px; font-size: 12px; line-height: 11px; padding-right: 32px; }
.zoomrow { display: flex; align-items: center; gap: 4px; }
.zoom { width: 76px; height: 14px; }
.zoom::-webkit-slider-runnable-track { height: 14px; background: linear-gradient(transparent 6px, #7b95bb 6px, #7b95bb 7px, #fff 7px, #fff 8px, transparent 8px); }
.zoom::-webkit-slider-thumb { appearance: none; width: 10px; height: 14px; background: url("data:image/svg+xml,%3Csvg xmlns='http://www.w3.org/2000/svg' width='10' height='14'%3E%3Cpath d='M1 1h8v8l-4 4-4-4z' fill='%23dfeafa' stroke='%234f6e9d'/%3E%3Cpath d='M5 4v4' stroke='%234f6e9d'/%3E%3C/svg%3E"); }
.views { display: flex; align-items: center; gap: 3px; margin-right: 21px; }
.fit { border: 1px solid #5e7190; border-radius: 2px; background: #b3c0d4; }
.full { display: flex; align-items: flex-end; font-size: 8px; line-height: 12px; color: #000; }
.full svg { margin-left: -11px; }
.full span { z-index: 1; }
.swatch { background: #fff; border: 1px solid #b5c2d6; margin-bottom: 1px; }

/* export panel */
.subtabs { display: flex; align-items: flex-end; gap: 4px; height: 18px; padding: 0 2px; background: #c2dbfd; color: #2c448c; }
.subtabs button { height: 17px; padding: 0 5px; }
.subtabs .on { background: #dfeafa; border: 1px solid #a9c0e0; border-bottom: 0; padding: 0 3px; border-radius: 2px 4px 0 0; }
.exp-tools { height: 44px; display: grid; grid-template-columns: repeat(3, 102px); align-items: center; padding: 0 9px; background: #d5e4f5; border-bottom: 1px solid #9ab0cc; font-family: "Liberation Sans", Arial, sans-serif; font-size: 11px; }
.exp-tools button { display: flex; align-items: center; gap: 4px; text-align: left; }
.exp-tools svg { width: 23px; height: 23px; }
.treebox { flex: 1; min-height: 0; display: flex; margin: 0 4px 4px 2px; background: #fff; overflow: hidden; }
.tree { flex: 1; list-style: none; }
.tree li { position: relative; height: 18px; display: flex; align-items: center; padding-left: 30px; }
.tree li.root { padding-left: 26px; }
.rail { width: 19px; height: 18px; border-left: 1px dotted #888; }
.branch { width: 12px; height: 18px; border-left: 1px dotted #888; background: repeating-linear-gradient(90deg, transparent 0, transparent 1px, #888 1px, #888 2px) 0 9px / 100% 1px no-repeat; }
.stub { width: 7px; border-top: 1px dotted #888; }
.tree input { appearance: none; width: 11px; height: 11px; border: 1px solid #6d7480; background: #fff; flex: none; }
.tree li > svg { width: 14px; height: 14px; margin: 0 4px 0 2px; }
.tree li > svg.minus { width: 9px; height: 9px; margin: 0; }
.tree li > svg.fold { width: 16px; margin-right: 2px; }
.tree label { padding: 2px 1px; border: 1px solid transparent; line-height: 12px; }
.selected label { background: #3594f4; color: #fff; border: 1px dotted #1b3a66; }
.context { position: absolute; left: 115px; bottom: 10px; width: 179px; display: flex; flex-direction: column; padding: 1px 2px 2px; background: linear-gradient(90deg, #f0f0f0 29px, #dcdcdc 29px, #dcdcdc 30px, #f1f1f1 30px); border: 1px solid #979797; box-shadow: 2px 2px 2px #777; }
.context button { height: 22px; padding: 0 0 2px 32px; text-align: left; color: #111; }
.context button:disabled { color: #808080; }
.context hr { width: 145px; margin: 4px 0 3px 29px; border: 0; border-top: 1px solid #d6d6d6; background: #fff; height: 2px; }
.tree li > svg.cursor { position: absolute; left: 112px; top: -3px; width: 13px; height: 19px; margin: 0; }
.vscroll { width: 16px; background: #f0f0f0; display: flex; flex-direction: column; align-items: center; padding: 7px 0 6px; gap: 20px; }
.vscroll .lane { width: 15px; }
.vscroll .thumb { height: 91px; border: 1px solid #979797; background: linear-gradient(90deg, #f4f4f4, #c9c9c9); display: flex; flex-direction: column; justify-content: center; align-items: center; gap: 2px; }
.vscroll .thumb i { width: 7px; height: 1px; background: #555; }

/* status and taskbar */
.status { height: 25px; display: flex; align-items: stretch; border-top: 1px solid #6e8bb5; border-bottom: 1px solid #53709b; background: linear-gradient(#dceafc, #c0d8f7 50%, #cfe1fa); line-height: 23px; color: #22407e; }
.ready { flex: 1; padding-left: 9px; color: #3e5f9c; }
.cell { padding: 0 9px 0 8px; border-left: 1px solid #6f93c8; background: linear-gradient(#b7d0f3, #93b4e4 50%, #a8c5ef); color: #1a2c58; }
.cell + .cell { padding: 0 6px 0 3px; border-left-color: #e4f0ff; }
.taskbar { height: 29px; display: flex; background: linear-gradient(90deg, #8396ae, #a9c1dc 25%, #a9c1dc 78%, #8093aa 86%, #8496ac); }
.start { width: 44px; margin: -7px 11px 0 5px; }
.task { width: 43px; margin-right: 3px; display: grid; place-items: center; border: 1px solid #5c7594; border-radius: 3px; background: linear-gradient(135deg, #d6e3f1, #adc4dd); box-shadow: inset 0 0 0 1px #dfeaf6; }
.task.first { width: 35px; margin-right: 10px; box-shadow: inset 0 0 0 1px #dfeaf6, 3px 0 0 -1px #b7cbe1, 4px 0 0 -1px #5c7594; }
.tray { margin-left: auto; display: flex; align-items: center; gap: 12px; color: #fff; }
.tray time { font-size: 12px; padding-left: 8px; }
.tray svg:nth-child(2) { margin-right: -2px; }
.peek { align-self: stretch; width: 15px; border: 1px solid #4c5c70; background: linear-gradient(135deg, #a5b4c5, #53647a); }
```
